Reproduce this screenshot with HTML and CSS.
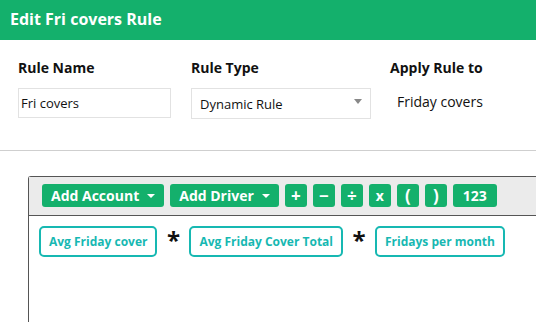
FILE: index.html
```html
<!DOCTYPE html>
<html lang="en">
<head>
  <meta charset="UTF-8">
  <title>Edit Fri covers Rule</title>
  <link rel="stylesheet" href="styles.css">
</head>
<body>

  <div class="header">Edit Fri covers Rule</div>

  <div class="fields">
    <div class="field field-name">
      <label>Rule Name</label>
      <input type="text" class="text-input" value="Fri covers">
    </div>
    <div class="field field-type">
      <label>Rule Type</label>
      <div class="select">
        <span>Dynamic Rule</span>
        <span class="select-arrow"></span>
      </div>
    </div>
    <div class="field">
      <label>Apply Rule to</label>
      <div class="apply-value">Friday covers</div>
    </div>
  </div>

  <hr class="divider">

  <div class="formula">
    <div class="toolbar">
      <button class="btn">Add Account <span class="caret"></span></button>
      <button class="btn">Add Driver <span class="caret"></span></button>
      <button class="btn btn-op">+</button>
      <button class="btn btn-op">&minus;</button>
      <button class="btn btn-op">&divide;</button>
      <button class="btn btn-op btn-x">x</button>
      <button class="btn btn-op">(</button>
      <button class="btn btn-op">)</button>
      <button class="btn btn-num">123</button>
    </div>
    <div class="tokens">
      <span class="token">Avg Friday cover</span>
      <span class="operator">*</span>
      <span class="token">Avg Friday Cover Total</span>
      <span class="operator">*</span>
      <span class="token">Fridays per month</span>
    </div>
  </div>

</body>
</html>
```

FILE: styles.css
```css
html, body {
  height: 100%;
  overflow: hidden;
}

body {
  margin: 0;
  display: flex;
  flex-direction: column;
  font-family: 'Open Sans', sans-serif;
  color: #111;
  background: #fff;
}

.header {
  flex: none;
  height: 40px;
  line-height: 38px;
  padding-left: 10px;
  background-color: #14b06c;
  color: #fff;
  font-size: 16px;
  font-weight: bold;
}

.fields {
  display: flex;
  padding: 18px 0 0 18px;
}

.field label {
  display: block;
  font-size: 14px;
  font-weight: bold;
  line-height: 20px;
  margin-bottom: 10px;
}

.field-name {
  width: 173px;
}

.field-type {
  width: 199px;
}

.text-input {
  box-sizing: border-box;
  width: 153px;
  height: 30px;
  padding: 0 2px;
  border: 1px solid #e2e2e2;
  font-family: 'Open Sans', sans-serif;
  font-size: 13px;
  color: #111;
  outline: none;
}

.select {
  box-sizing: border-box;
  width: 180px;
  height: 31px;
  padding: 0 8px;
  border: 1px solid #e2e2e2;
  display: flex;
  align-items: center;
  justify-content: space-between;
  font-size: 13px;
}

.select-arrow {
  width: 0;
  height: 0;
  border-left: 4px solid transparent;
  border-right: 4px solid transparent;
  border-top: 5px solid #888;
  margin-top: -5px;
}

.apply-value {
  padding: 4px 0 0 7px;
  font-size: 14px;
  line-height: 20px;
}

.divider {
  margin: 31px 0 0;
  border: none;
  border-top: 1px solid #cfcfcf;
}

/* box runs off the right and bottom edges */
.formula {
  flex: 1;
  margin: 25px 0 0 28px;
  border: 1px solid #555;
  border-right: none;
  border-bottom: none;
  border-radius: 3px 0 0 0;
}

.toolbar {
  display: flex;
  gap: 6px;
  height: 39px;
  padding: 7px 13px 0;
  box-sizing: border-box;
  background: #ebebeb;
  border-bottom: 1px solid #555;
}

.btn {
  height: 23px;
  padding: 0 9px;
  border: none;
  border-radius: 3px;
  background: #14b06c;
  color: #fff;
  font-family: 'Open Sans', sans-serif;
  font-size: 14px;
  font-weight: bold;
  display: flex;
  align-items: center;
}

.btn-op {
  width: 22px;
  padding: 0;
  justify-content: center;
  font-size: 17px;
}

.btn-x {
  font-size: 14px;
}

.btn-num {
  width: 44px;
  padding: 0;
  justify-content: center;
}

.caret {
  width: 0;
  height: 0;
  margin-left: 8px;
  border-left: 4px solid transparent;
  border-right: 4px solid transparent;
  border-top: 4px solid #fff;
}

.tokens {
  display: flex;
  align-items: flex-start;
  padding: 10px 0 0 10px;
}

.token {
  box-sizing: border-box;
  height: 31px;
  padding: 0 8px;
  border: 2px solid #17b8b2;
  border-radius: 5px;
  color: #17b8b2;
  font-size: 12px;
  font-weight: bold;
  display: flex;
  align-items: center;
}

.operator {
  width: 32px;
  text-align: center;
  font-size: 24px;
  font-weight: bold;
  line-height: 28px;
}
```
